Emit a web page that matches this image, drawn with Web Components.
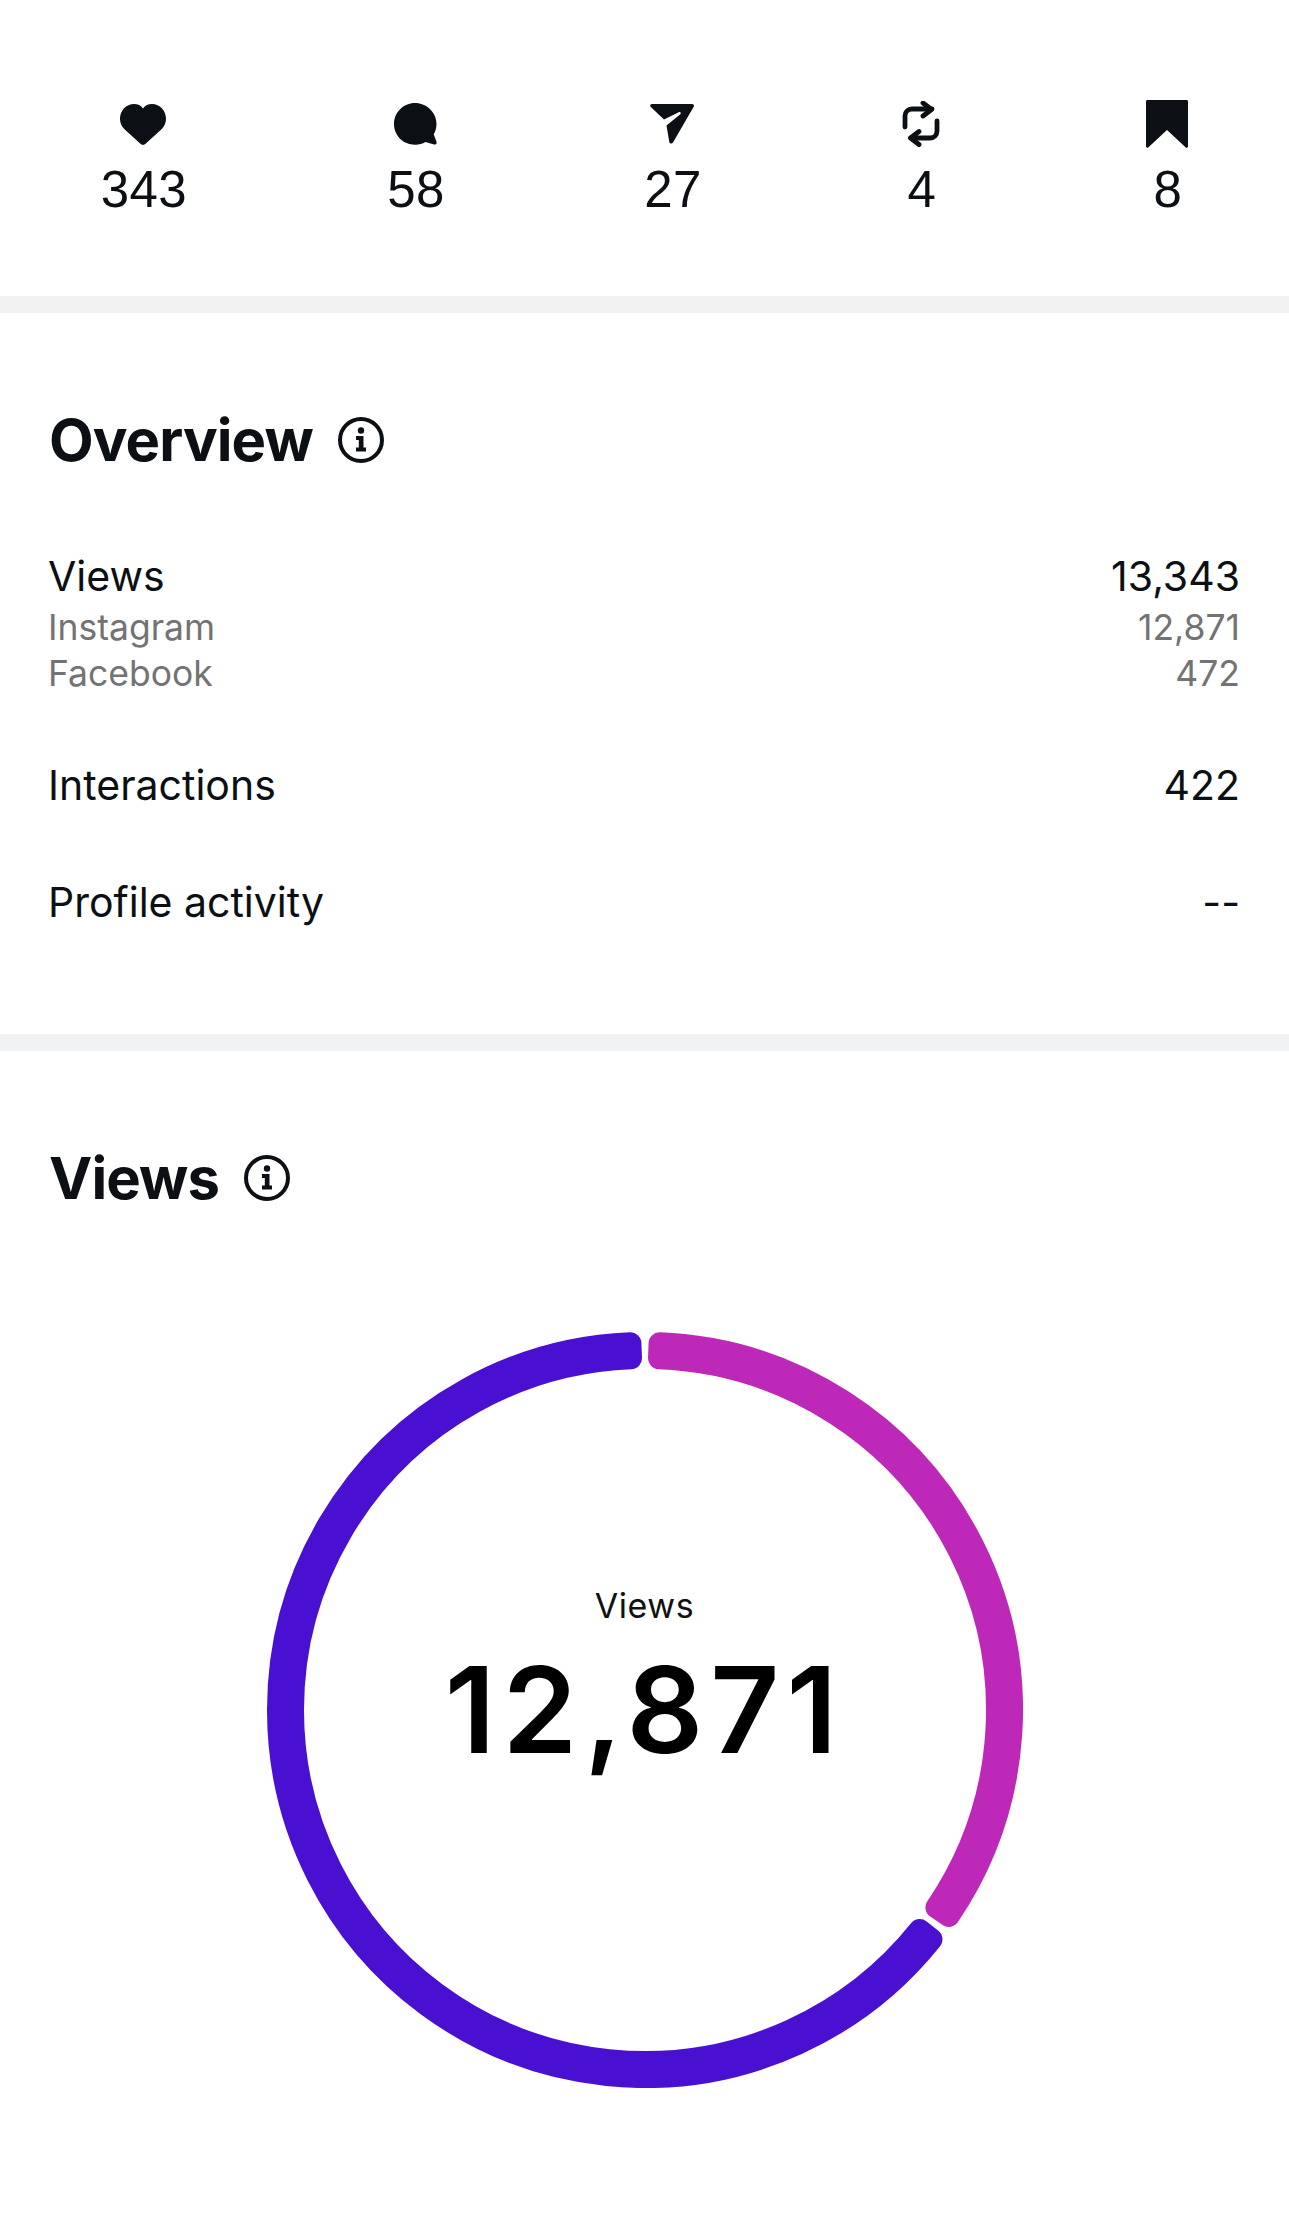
<!DOCTYPE html>
<html>
<head>
<meta charset="utf-8">
<title>Insights</title>
<style>
  html, body { margin: 0; background: #fff; }
  body { width: 1289px; color: #0c1014; font-family: "Inter", "Liberation Sans", sans-serif; }
</style>
</head>
<body>
<stats-bar>
  <stat-item value="343"><svg viewBox="0 0 46 43" width="46" height="41" preserveAspectRatio="none"><path fill="currentColor" d="M23 43c-1 0-1.800-.5-2.600-1.200L4.500 26.500C1.600 23.500 0 20.100 0 15.600 0 6.700 6.200 0 14 0c3.800 0 7 1.500 9 4.600C25 1.500 28.200 0 32 0c7.800 0 14 6.700 14 15.600 0 4.500-1.600 7.900-4.500 10.900L25.600 41.800c-.8.700-1.600 1.200-2.600 1.200z"/></svg></stat-item>
  <stat-item value="58"><svg viewBox="0 0 43 42" width="43" height="42"><path fill="currentColor" d="M21 0C32.600 0 42.500 9.400 42.500 21c0 4-1 7.200-2.800 10.200l2.800 7.600c.6 1.800-.8 3.200-2.500 2.600l-8.500-2.500c-3 1.800-6.500 2.800-10 2.800C9.400 42 0 32.600 0 21S9.400 0 21 0z"/></svg></stat-item>
  <stat-item value="27"><svg viewBox="0 0 44 40" width="44" height="40"><path fill="currentColor" d="M2 0H42c1.600 0 2.400 1.400 1.700 2.800L23 38.500c-.8 1.600-3.300 1.300-3.700-.5L16.500 21.500 30 10.500c1.500-1.200.4-3.200-1.300-2.200L14 15.500.8 3C-.4 1.800.2 0 2 0z"/></svg></stat-item>
  <stat-item value="4"><svg viewBox="0 0 38 46" width="38" height="46" fill="none" stroke="currentColor" stroke-width="4.800" stroke-linecap="round" stroke-linejoin="round"><path d="M3 26V15c0-4 3-7 7-7h20"/><path d="M21 2l8.500 6.500-8.500 6.500"/><path d="M35 20v10c0 4-3 7-7 7H9"/><path d="M17 30.500l-8.500 6.500 8.500 6.500"/></svg></stat-item>
  <stat-item value="8"><svg viewBox="0 0 42 48" width="42" height="48"><path fill="currentColor" d="M1.500 0h39c.9 0 1.500.6 1.500 1.500V46c0 1.600-1.500 2.400-2.500 1.300L21 30 2.500 47.300C1.500 48.400 0 47.600 0 46V1.500C0 .6.600 0 1.500 0z"/></svg></stat-item>
</stats-bar>

<page-section heading="Overview" pad-bottom="103">
  <metric-row label="Views" value="13,343">
    <metric-sub label="Instagram" value="12,871"></metric-sub>
    <metric-sub label="Facebook" value="472"></metric-sub>
  </metric-row>
  <metric-row label="Interactions" value="422"></metric-row>
  <metric-row label="Profile activity" value="--"></metric-row>
</page-section>

<page-section heading="Views">
  <donut-chart label="Views" value="12,871"></donut-chart>
</page-section>

<script>
// STATS BAR ______________________________________________
class StatsBar extends HTMLElement {
  constructor() {
    super()
    this.attachShadow({mode: 'open'})
    this.shadowRoot.innerHTML = `
    <style>
      :host {
        display: grid;
        grid-template-columns: 266px 278px 236px 262px 230px;
        padding: 100px 6px 0 11px;
        height: 196px;
        border-bottom: 17px solid #f0f2f4;
      }
    </style>
    <slot></slot>`
  }
}
customElements.define('stats-bar', StatsBar)

class StatItem extends HTMLElement {
  constructor() {
    super()
    this.attachShadow({mode: 'open'})
    this.shadowRoot.innerHTML = `
    <style>
      :host {
        display: flex;
        flex-direction: column;
        align-items: center;
      }
      .icon {
        height: 48px;
        display: flex;
        align-items: center;
        justify-content: center;
        margin-right: 2px;
      }
      .num {
        margin-top: 12px;
        font: 400 51px/60px "Liberation Sans", sans-serif;
        letter-spacing: .4px;
      }
    </style>
    <div class="icon"><slot></slot></div>
    <div class="num">${this.getAttribute('value')}</div>`
  }
}
customElements.define('stat-item', StatItem)

// SECTION ________________________________________________
class PageSection extends HTMLElement {
  constructor() {
    super()
    this.attachShadow({mode: 'open'})
    const bottom = this.getAttribute('pad-bottom')
    this.shadowRoot.innerHTML = `
    <style>
      :host {
        display: block;
        padding: 97px 49px ${bottom || 0}px 48px;
      }
      :host([pad-bottom]) { border-bottom: 17px solid #f0f2f4; }
      header {
        display: flex;
        align-items: center;
        gap: 25px;
        height: 60px;
        padding: 0 0 18px 1px;
      }
      h2 {
        margin: 0;
        font: 700 58px/60px "Inter", "Liberation Sans", sans-serif;
        letter-spacing: -.9px;
      }
      svg { display: block; }
    </style>
    <header>
      <h2>${this.getAttribute('heading')}</h2>
      <svg width="46" height="46" viewBox="0 0 46 46">
        <circle cx="23" cy="23" r="21" fill="none" stroke="currentColor" stroke-width="4"/>
        <circle cx="23" cy="13.500" r="3.200" fill="currentColor"/>
        <path fill="currentColor" d="M18 19h7.500v11.500H28v4H18v-4h2.800v-7.500H18z"/>
      </svg>
    </header>
    <slot></slot>`
  }
}
customElements.define('page-section', PageSection)

// METRIC ROWS ____________________________________________
class MetricRow extends HTMLElement {
  constructor() {
    super()
    this.attachShadow({mode: 'open'})
    this.shadowRoot.innerHTML = `
    <style>
      :host {
        display: block;
        margin-top: 60px;
      }
      .line {
        display: flex;
        justify-content: space-between;
        font-size: 41px;
        line-height: 57px;
      }
    </style>
    <div class="line"><span>${this.getAttribute('label')}</span><span>${this.getAttribute('value')}</span></div>
    <slot></slot>`
  }
}
customElements.define('metric-row', MetricRow)

class MetricSub extends HTMLElement {
  constructor() {
    super()
    this.attachShadow({mode: 'open'})
    this.shadowRoot.innerHTML = `
    <style>
      :host {
        display: flex;
        justify-content: space-between;
        color: #737373;
        font-size: 35.500px;
        line-height: 46px;
      }
    </style>
    <span>${this.getAttribute('label')}</span><span>${this.getAttribute('value')}</span>`
  }
}
customElements.define('metric-sub', MetricSub)

// DONUT CHART ____________________________________________
class DonutChart extends HTMLElement {
  constructor() {
    super()
    this.attachShadow({mode: 'open'})
    const seg = (from, to) => this.sector(from, to)
    this.shadowRoot.innerHTML = `
    <style>
      :host {
        display: grid;
        place-items: center;
        margin-left: 1px;
        padding-top: 106px;
      }
      .ring, .center { grid-area: 1 / 1; }
      svg { display: block; }
      .center {
        text-align: center;
        padding-bottom: 64px;
        color: #000;
      }
      .label { font: 400 34px/44px "Inter", "Liberation Sans", sans-serif; letter-spacing: .6px; color: #111; }
      .value { font: 600 120px/124px "Inter", "Liberation Sans", sans-serif; letter-spacing: 7px; margin-top: 20px; }
    </style>
    <svg class="ring" width="756" height="756" viewBox="-378 -378 756 756">
      <path fill="#bd28b8" stroke="#bd28b8" stroke-width="22" stroke-linejoin="round" d="${seg(0, 126.4)}"/>
      <path fill="#4a10d2" stroke="#4a10d2" stroke-width="22" stroke-linejoin="round" d="${seg(126.4, 360)}"/>
    </svg>
    <div class="center">
      <div class="label">${this.getAttribute('label')}</div>
      <div class="value">${this.getAttribute('value')}</div>
    </div>`
  }
  // annular sector inset by the corner radius, the stroke brings it back out
  sector(from, to) {
    const outer = 367, inner = 352, mid = 359.5, pad = 14.3 / mid * 180 / Math.PI
    const pt = (r, a) => {
      const t = a * Math.PI / 180
      return `${(r * Math.sin(t)).toFixed(2)} ${(-r * Math.cos(t)).toFixed(2)}`
    }
    const a = from + pad, b = to - pad
    const large = b - a > 180 ? 1 : 0
    return `M${pt(outer, a)}A${outer} ${outer} 0 ${large} 1 ${pt(outer, b)}L${pt(inner, b)}A${inner} ${inner} 0 ${large} 0 ${pt(inner, a)}Z`
  }
}
customElements.define('donut-chart', DonutChart)
</script>
</body>
</html>
